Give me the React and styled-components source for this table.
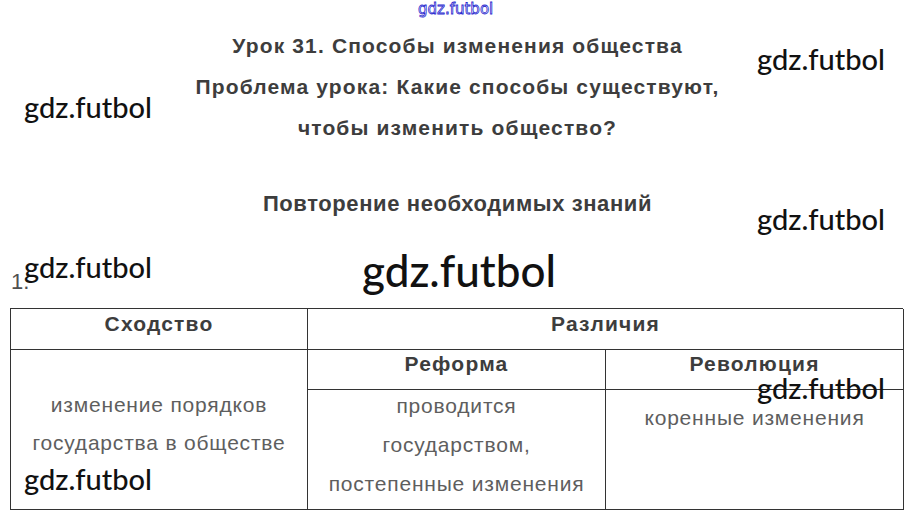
import React from 'react';
import styled, { createGlobalStyle } from 'styled-components';

const GlobalStyle = createGlobalStyle`
  html, body {
    margin: 0;
    padding: 0;
    background: #ffffff;
  }
`;

const Page = styled.div`
  position: relative;
  width: 915px;
  height: 525px;
  overflow: hidden;
  background: #ffffff;
  font-family: 'Liberation Sans', Arial, sans-serif;
  color: #3d3d3d;
`;

const TitleBlock = styled.div`
  padding-top: 25px;
  text-align: center;
  font-weight: 700;
  font-size: 21px;
  letter-spacing: 1.15px;
  line-height: 41px;
`;

const SectionHeading = styled.div`
  margin-top: 35px;
  text-align: center;
  font-weight: 700;
  font-size: 22px;
  letter-spacing: 0.6px;
  line-height: 41px;
`;

const TaskNumber = styled.div`
  margin: 46px 0 0 11px;
  font-size: 22px;
  line-height: 24px;
  color: #505050;
`;

const Table = styled.div`
  display: grid;
  grid-template-columns: 297px 298px 298px;
  grid-template-rows: 41px 40px 120px;
  margin: 14px 0 0 10px;
  width: 893px;
  border-top: 1px solid #333;
  border-left: 1px solid #333;
  box-sizing: border-box;
`;

const Cell = styled.div`
  grid-column: ${(p) => p.$col};
  grid-row: ${(p) => p.$row};
  border-right: 1px solid #333;
  border-bottom: 1px solid #333;
  text-align: center;
  padding-top: ${(p) => p.$pad || 0}px;
`;

const HeadText = styled.div`
  font-weight: 700;
  font-size: 21px;
  letter-spacing: 1.2px;
  line-height: 24px;
  color: #3d3d3d;
`;

const BodyText = styled.div`
  font-size: 21px;
  letter-spacing: 0.8px;
  line-height: ${(p) => p.$lh || 39}px;
  color: #5e5e5e;
  margin-top: ${(p) => p.$shift || 0}px;
`;

const Watermark = styled.span`
  position: absolute;
  left: ${(p) => p.$x}px;
  top: ${(p) => p.$y}px;
  font-family: Lato, 'Open Sans', sans-serif;
  font-weight: 500;
  font-size: ${(p) => p.$size || 29}px;
  line-height: 1;
  color: #111;
  white-space: nowrap;
`;

const OutlineMark = styled.span`
  position: absolute;
  left: 418px;
  top: 2px;
  font-family: 'DejaVu Sans', Verdana, sans-serif;
  font-size: 15px;
  line-height: 1;
  color: #ffffff;
  -webkit-text-stroke: 0.8px #2b2bd0;
  white-space: nowrap;
`;

const marks = [
  { x: 757, y: 44 },
  { x: 24, y: 92 },
  { x: 757, y: 204 },
  { x: 24, y: 252 },
  { x: 362, y: 248, size: 44 },
  { x: 757, y: 373 },
  { x: 24, y: 464 },
];

export default function App() {
  return (
    <>
      <GlobalStyle />
      <Page>
        <TitleBlock>
          <div>Урок 31. Способы изменения общества</div>
          <div>Проблема урока: Какие способы существуют,</div>
          <div>чтобы изменить общество?</div>
        </TitleBlock>
        <SectionHeading>Повторение необходимых знаний</SectionHeading>
        <TaskNumber>1.</TaskNumber>
        <Table>
          <Cell $col="1" $row="1" $pad={3}>
            <HeadText>Сходство</HeadText>
          </Cell>
          <Cell $col="2 / 4" $row="1" $pad={3}>
            <HeadText>Различия</HeadText>
          </Cell>
          <Cell $col="1" $row="2 / 4" $pad={36}>
            <BodyText $lh={38}>
              изменение порядков
              <br />
              государства в обществе
            </BodyText>
          </Cell>
          <Cell $col="2" $row="2" $pad={2}>
            <HeadText>Реформа</HeadText>
          </Cell>
          <Cell $col="3" $row="2" $pad={2}>
            <HeadText>Революция</HeadText>
          </Cell>
          <Cell $col="2" $row="3">
            <BodyText $shift={-4}>
              проводится
              <br />
              государством,
              <br />
              постепенные изменения
            </BodyText>
          </Cell>
          <Cell $col="3" $row="3" $pad={8}>
            <BodyText>коренные изменения</BodyText>
          </Cell>
        </Table>
        <OutlineMark>gdz.futbol</OutlineMark>
        {marks.map((m, i) => (
          <Watermark key={i} $x={m.x} $y={m.y} $size={m.size}>
            gdz.futbol
          </Watermark>
        ))}
      </Page>
    </>
  );
}
